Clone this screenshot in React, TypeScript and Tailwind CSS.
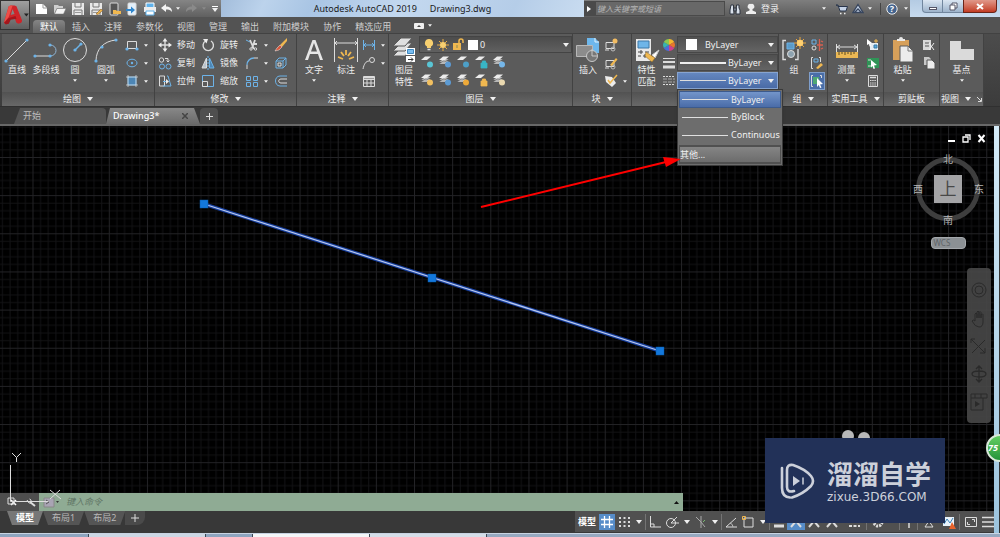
import { FC, ReactNode } from 'react';
import clsx from 'clsx';

interface IconProps {
  w?: number;
  h?: number;
  children: ReactNode;
}

const Icon: FC<IconProps> = ({ w = 14, h = 14, children }) => (
  <svg width={w} height={h} viewBox={`0 0 ${w} ${h}`} fill="none" stroke="#dcdcdc" className="shrink-0" aria-hidden="true">
    {children}
  </svg>
);

const Caret: FC<{ small?: boolean; dim?: boolean }> = ({ small, dim }) => (
  <svg width={small ? 4 : 6} height={small ? 3 : 4} viewBox="0 0 6 4" className="shrink-0" aria-hidden="true">
    <path d="M0 0h6L3 4z" fill={dim ? '#8a8a8a' : '#f0f0f0'} />
  </svg>
);

const BLUE = '#6db3e8';
const GOLD = '#f0b850';

/* ---------- title bar ---------- */

const NewFile = () => (
  <Icon>
    <path d="M1 2h7l4 4v6H1z" fill="#fff" stroke="none" />
    <path d="M8 2v4h4" stroke="#999" />
  </Icon>
);

const OpenFile = () => (
  <Icon>
    <path d="M1 12V3h4l1 1h4v2H4z" fill="#cfcfcf" stroke="none" />
    <path d="M4 6.500h9L10.500 12H1.500z" fill="#f4f4f4" stroke="#777" strokeWidth=".5" />
  </Icon>
);

const Save: FC<{ pen?: boolean }> = ({ pen }) => (
  <Icon>
    <path d="M1 1h12v12H1z" fill="#e8e8e8" stroke="none" />
    <path d="M4 1v4h6V1M3 13V8h8v5" stroke="#777" />
    <path d="M4 10.500h6" stroke="#999" />
    {pen && <path d="M7 12l5-5 1.500 1.500-4.500 4z" fill={GOLD} stroke="#8a5a20" strokeWidth=".6" />}
  </Icon>
);

const Device: FC<{ upload?: boolean }> = ({ upload }) => (
  <Icon>
    <rect x="3" y="1" width="8" height="12" rx="1" fill={upload ? '#e4f0fa' : '#555'} stroke="#ddd" />
    {upload ? (
      <path d="M1 7h5V4.500L10 8l-4 3.500V9H1z" fill="#2f86cc" stroke="none" />
    ) : (
      <path d="M6 12V8h3l1 1h4v3z" fill={GOLD} stroke="none" />
    )}
  </Icon>
);

const Printer = () => (
  <Icon>
    <path d="M3 1h8v5H3z" fill="#5fb1ea" stroke="#fff" />
    <path d="M1 5h12v5H1z" fill="#ececec" stroke="none" />
    <path d="M3 9h8v4H3z" fill="#fff" stroke="#5fb1ea" />
  </Icon>
);

const Undo: FC<{ flip?: boolean }> = ({ flip }) => (
  <Icon w={13} h={12}>
    {flip ? (
      <path d="M12 5L7 1v2.500C3.500 3.500 1 5 1 9c1.500-2 3-2.500 6-2.500V9z" fill="#8a8a8a" stroke="none" />
    ) : (
      <path d="M1 5l5-4v2.500C9.500 3.500 12 5 12 9c-1.500-2-3-2.500-6-2.500V9z" fill="#f4f4f4" stroke="none" />
    )}
  </Icon>
);

const quickAccess = [
  { label: '新建', icon: <NewFile /> },
  { label: '打开', icon: <OpenFile /> },
  { label: '保存', icon: <Save /> },
  { label: '另存为', icon: <Save pen /> },
  { label: '从移动设备打开', icon: <Device /> },
  { label: '保存到移动设备', icon: <Device upload /> },
  { label: '打印', icon: <Printer /> }
];

const TitleBar: FC = () => (
  <div className="flex h-[17px] bg-gradient-to-b from-[#b4cbe3] to-[#c8dbee]">
    <div className="flex items-center bg-gradient-to-b from-[#858585] to-[#606060] pl-[33px]">
      {quickAccess.map(item => (
        <button key={item.label} aria-label={item.label} className="flex w-[18px] justify-center">
          {item.icon}
        </button>
      ))}
      <button aria-label="放弃" className="flex w-[14px] justify-center"><Undo /></button>
      <button aria-label="放弃列表" className="flex w-[10px] justify-center"><Caret small /></button>
      <button aria-label="重做" className="flex w-4 justify-center"><Undo flip /></button>
      <button aria-label="重做列表" className="flex w-[10px] justify-center"><Caret small dim /></button>
      <button aria-label="自定义快速访问工具栏" className="flex w-3 flex-col items-center gap-px">
        <span className="h-px w-[6px] bg-white" />
        <Caret />
      </button>
    </div>
    <h1 className="flex flex-1 items-center justify-center gap-[13px] bg-[linear-gradient(115deg,#a3bddb_0%,#bcd3ec_12%,#a9c5e4_25%,#c3d8ef_50%,#b5cde8_80%,#c9dcf0_100%)] text-[9px] whitespace-nowrap text-[#1a1a1a]">
      <span>Autodesk AutoCAD 2019</span>
      <span>Drawing3.dwg</span>
    </h1>
    <div className="flex items-center bg-gradient-to-b from-[#7e7e7e] to-[#5c5c5c]">
      <button aria-label="展开搜索" className="flex h-[15px] w-[11px] items-center justify-center bg-[#4a4a4a]">
        <Icon w={4} h={6}><path d="M0 0l4 3-4 3z" fill="#fff" stroke="none" /></Icon>
      </button>
      <input
        aria-label="搜索"
        placeholder="键入关键字或短语"
        className="h-[15px] w-[130px] border border-[#4a4a4a] bg-[#686868] px-px text-[8px] italic outline-none placeholder:text-[#b5b5b5]"
      />
      <button aria-label="查找" className="flex w-5 justify-center">
        <Icon w={12} h={12}>
          <path d="M2 2h2.500v3L5 11H1V7zM7.500 2H10v3l1 2v4H7zM5 5h2v3H5z" fill="#d8e0ea" stroke="#2f3540" />
        </Icon>
      </button>
      <button className="flex items-center gap-1 text-[9px] text-[#eee]">
        <Icon w={12} h={12}>
          <path d="M6 1a2.500 2.500 0 0 1 1.500 5v1.500L11 9v2H1V9l3.500-1.500V6A2.500 2.500 0 0 1 6 1z" fill="#eee" stroke="none" />
        </Icon>
        登录
      </button>
      <button aria-label="登录菜单" className="mr-1 ml-[41px] flex w-2 justify-center"><Caret small /></button>
      <button aria-label="应用商店" className="flex w-[18px] justify-center">
        <Icon w={13} h={12}>
          <path d="M1 2h2l2 6h6l1.500-4.500H4z" fill="#c4d2e6" stroke="#28344a" />
          <path d="M5 10.500h1.500M9 10.500h1.500" stroke="#eee" strokeWidth="1.500" />
        </Icon>
      </button>
      <button aria-label="保持连接" className="flex w-4 justify-center">
        <Icon w={12} h={12}><path d="M6 1.500L11 9.500H1zM3 9l3-3 3 3" fill="#c4d2e6" stroke="#38465e" strokeWidth="1.300" /></Icon>
      </button>
      <button aria-label="连接菜单" className="mr-[6px] flex w-2 justify-center"><Caret small /></button>
      <button aria-label="帮助" className="flex w-[22px] justify-center border-l border-[#444]">
        <Icon w={12} h={12}>
          <circle cx="6" cy="6" r="5.200" fill="#44648e" stroke="#eee" />
          <text x="6" y="9" textAnchor="middle" fontSize="9" fontWeight="700" fill="#fff" stroke="none">?</text>
        </Icon>
      </button>
      <button aria-label="帮助菜单" className="flex w-2 justify-center"><Caret small /></button>
    </div>
    <div className="flex items-start pr-[3px] pl-3">
      <button aria-label="最小化" className="flex h-[13px] w-[21px] items-center justify-center rounded-bl border border-t-0 border-[#71869e] bg-gradient-to-b from-[#dbe6f2] to-[#9db3cb]">
        <span className="mt-1 h-[3px] w-2 border border-[#556] bg-white" />
      </button>
      <button aria-label="还原" className="flex h-[13px] w-5 items-center justify-center border-b border-[#71869e] bg-gradient-to-b from-[#dbe6f2] to-[#9db3cb]">
        <Icon w={9} h={9}>
          <path d="M3 1h5v5H3z" fill="#fff" stroke="#556" />
          <path d="M1 3h5v5H1z" fill="#fff" stroke="#556" />
        </Icon>
      </button>
      <button aria-label="关闭" className="flex h-[13px] w-[34px] items-center justify-center rounded-br border border-t-0 border-[#6b2418] bg-gradient-to-b from-[#e0988a] to-[#c23a22]">
        <Icon w={8} h={7}><path d="M1 1l6 5M7 1L1 6" stroke="#fff" strokeWidth="2" /></Icon>
      </button>
    </div>
  </div>
);

const ribbonTabs = ['默认', '插入', '注释', '参数化', '视图', '管理', '输出', '附加模块', '协作', '精选应用'];

const RibbonTabs: FC = () => (
  <nav className="flex h-4 items-stretch bg-[#535353] pl-[33px] text-[9px] text-[#cfcfcf]">
    {ribbonTabs.map((tab, i) => (
      <button
        key={tab}
        className={clsx('mt-[3px] px-[7px] leading-[13px]', i === 0 && 'rounded-t-sm bg-gradient-to-b from-[#858585] to-[#636363] text-white')}
      >
        {tab}
      </button>
    ))}
    <button aria-label="最小化功能区" className="ml-4 flex items-center gap-1 pt-px">
      <Icon w={10} h={6}>
        <rect width="10" height="6" rx="1" fill="#f0f0f0" stroke="none" />
        <path d="M3 4l2-2 2 2z" fill="#444" stroke="none" />
      </Icon>
      <Caret small />
    </button>
  </nav>
);

/* ---------- ribbon building blocks ---------- */

interface PanelProps {
  title?: string;
  width: string;
  arrow?: boolean;
  extra?: ReactNode;
  children: ReactNode;
}

const Panel: FC<PanelProps> = ({ title, width, arrow = true, extra, children }) => (
  <section className={clsx('flex shrink-0 flex-col border-r border-[#424242] bg-[#5b5b5b]', width)}>
    <div className="flex flex-1 pt-[2px]">{children}</div>
    <button
      aria-label={title ?? '特性'}
      className="flex h-[14px] items-center justify-center gap-[6px] bg-gradient-to-b from-[#525252] to-[#686868] text-[9px] leading-[14px] text-[#f0f0f0]"
    >
      {title}
      {title && arrow && <Caret />}
      {extra}
    </button>
  </section>
);

interface ToolProps {
  label: string;
  icon: ReactNode;
  width: string;
  arrow?: boolean;
}

const Tool: FC<ToolProps> = ({ label, icon, width, arrow }) => (
  <button className={clsx('flex shrink-0 flex-col items-center text-[9px] leading-3 text-[#ececec]', width)}>
    <span className="flex h-7 items-center">{icon}</span>
    <span className="whitespace-pre-line">{label}</span>
    {arrow && <span className="flex h-2 items-center"><Caret small /></span>}
  </button>
);

interface SmallToolProps {
  name: string;
  icon: ReactNode;
  text?: boolean;
  arrow?: boolean;
  active?: boolean;
}

const SmallTool: FC<SmallToolProps> = ({ name, icon, text, arrow, active }) => (
  <button
    aria-label={name}
    className={clsx('flex h-[18px] items-center gap-[5px] px-px text-[9px] text-[#ececec]', active && 'bg-[#4a6ea8] outline outline-[#7f9ecb] -outline-offset-1')}
  >
    {icon}
    {text && name}
    {arrow && <Caret small />}
  </button>
);

/* ---------- ribbon icons ---------- */

const Dot: FC<{ x: number; y: number }> = ({ x, y }) => <circle cx={x} cy={y} r="1.600" fill={BLUE} stroke="none" />;

const LineIcon = () => (
  <Icon w={26} h={26}><path d="M2 24L23 3" /><Dot x={2} y={24} /><Dot x={23} y={3} /></Icon>
);
const PolylineIcon = () => (
  <Icon w={26} h={26}>
    <path d="M2 19h15" /><path d="M17 19c8 0 8-11 0-11" stroke="#8fb4d4" />
    <Dot x={2} y={19} /><Dot x={17} y={19} /><Dot x={17} y={8} />
  </Icon>
);
const CircleIcon = () => (
  <Icon w={26} h={26}><circle cx="13" cy="13" r="11.500" /><path d="M13 13l6-6" stroke={BLUE} strokeWidth="1.500" /><Dot x={13} y={13} /><Dot x={19} y={7} /></Icon>
);
const ArcIcon = () => (
  <Icon w={26} h={26}><path d="M3 24C3 12 11 4 23 3" /><Dot x={3} y={24} /><Dot x={9} y={10} /><Dot x={23} y={3} /></Icon>
);
const RectIcon = () => (
  <Icon><path d="M2.500 3.500h9v7h-9z" /><Dot x={2} y={11} /><Dot x={12} y={11} /></Icon>
);
const EllipseIcon = () => (
  <Icon><ellipse cx="7" cy="7" rx="5" ry="3.800" stroke={BLUE} /><circle cx="7" cy="7" r="1.200" fill={BLUE} stroke="none" /></Icon>
);
const HatchIcon = () => (
  <Icon><path d="M3 3h8v8H3z" fill="#4d86b5" stroke={BLUE} /><path d="M1 3h12M1 11h12M3 1v12M11 1v12" strokeWidth=".7" /></Icon>
);
const MoveIcon = () => (
  <Icon>
    <path d="M7 2v10M2 7h10" strokeWidth="1.400" />
    <path d="M7 0L4.500 3.500h5zM7 14l-2.500-3.500h5zM0 7l3.500-2.500v5zM14 7l-3.500-2.500v5z" fill="#eee" stroke="none" />
  </Icon>
);
const RotateIcon = () => (
  <Icon><path d="M4.500 3A5.200 5.200 0 1 0 10 3" strokeWidth="1.400" /><path d="M2 1l5 0-1.500 4.500z" fill="#eee" stroke="none" /></Icon>
);
const CopyIcon = () => (
  <Icon>
    <circle cx="3.500" cy="4" r="2.200" /><circle cx="4" cy="10.500" r="2.500" stroke={BLUE} /><circle cx="10.500" cy="10.500" r="2.500" stroke={BLUE} />
    <path d="M7 2.500h3v3M8.500 4.500L10 6l1.500-1.500" />
  </Icon>
);
const MirrorIcon = () => (
  <Icon><path d="M5.500 2v10H1z" fill="#b8c4cf" /><path d="M8.500 2v10H13z" stroke={BLUE} fill="#4d86b5" /><path d="M7 0v14" strokeDasharray="2 1" stroke={BLUE} /></Icon>
);
const StretchIcon = () => (
  <Icon><path d="M1.500 2v10h5V2z" /><path d="M5 7.500h4M9 2h1l3 10H5" stroke={BLUE} /><path d="M8 5l3 2.500L8 10z" fill="#eee" stroke="none" /></Icon>
);
const ScaleIcon = () => (
  <Icon><path d="M1.500 1.500h11v11h-11z" stroke={BLUE} /><path d="M1.500 7.500h5v5h-5z" /></Icon>
);
const TrimIcon = () => (
  <Icon><path d="M1 2l4 2" stroke={BLUE} /><path d="M5 2l4 9M10 2L7 10M8 6h4" strokeWidth="1.800" /><circle cx="6" cy="11" r="1.200" /><circle cx="10.500" cy="11" r="1.200" /></Icon>
);
const FilletIcon = () => (
  <Icon><path d="M2 13V9" /><path d="M2 9c0-4 3-7 7-7" stroke={BLUE} strokeWidth="1.300" /><path d="M9 2h4" /></Icon>
);
const ArrayIcon = () => (
  <Icon><path d="M1.500 2.500h4v4h-4zM8.500 2.500h4v4h-4zM1.500 8.500h4v4h-4zM8.500 8.500h4v4h-4z" stroke={BLUE} /></Icon>
);
const EraseIcon = () => (
  <Icon><path d="M13 0L6 7l2 2 5-6z" fill={GOLD} stroke="none" /><path d="M6 7l2 2-3 3-4 1 2-3z" fill="#d8583c" stroke="#eee" strokeWidth=".5" /></Icon>
);
const ExplodeIcon = () => (
  <Icon><path d="M2 5h7v7H2zM2 5l3-3h7l-3 3M12 2v7l-3 3" stroke={BLUE} /><path d="M4 7h3v3H4z" /></Icon>
);
const OffsetIcon = () => (
  <Icon><path d="M13 2H6c-6 0-6 10 0 10h7" stroke={BLUE} /><path d="M13 5H7c-3 0-3 4 0 4h6" /></Icon>
);
const TextIcon = () => (
  <Icon w={22} h={26}><path d="M2 23L9.500 3h3L20 23h-3l-2-6H7l-2 6zM8 14.500h6L11 6z" fill="#e6e6e6" fillRule="evenodd" stroke="none" /></Icon>
);
const DimensionIcon = () => (
  <Icon w={26} h={26}>
    <path d="M1.500 1v24M24.500 1v24M2 6h22M4 4L2 6l2 2M22 4l2 2-2 2" />
    <path d="M13 13v5M8 15l3 4M18 15l-3 4M5 20l5 2M21 20l-5 2" stroke={GOLD} strokeWidth="1.800" />
  </Icon>
);
const LinearDimIcon = () => (
  <Icon><path d="M1.500 2v10M12.500 2v10" stroke={BLUE} /><path d="M2 7h10M4 5L2 7l2 2M10 5l2 2-2 2" stroke={BLUE} /></Icon>
);
const LeaderIcon = () => (
  <Icon><path d="M1 13c1-5 3-8 6-8" /><circle cx="10" cy="4" r="2.500" /></Icon>
);
const TableIcon = () => (
  <Icon><path d="M1.500 2.500h11v10h-11zM1.500 5.500h11M1.500 9h11M5 5v7M9 5v7" /><path d="M2 3.500h10" strokeWidth="2" /></Icon>
);
const LayersIcon = () => (
  <Icon w={26} h={28}>
    {[17, 12, 7].map(y => (
      <path key={y} d={`M2 ${y + 3}L10 ${y - 5}h11l-7 8z`} fill="#e0e0e0" stroke="#5b5b5b" />
    ))}
    <path d="M15 12h9v7h-9zM15 20h9v6h-9z" fill="#fff" stroke="none" />
    <path d="M16.500 13.500h6v4h-6z" fill="#78bdf0" stroke="#3f88c0" />
    <path d="M17 23.500h5M20 21.500l2 2-2 2" stroke="#333" />
  </Icon>
);
const MiniLayer: FC<{ color: string; stack?: boolean; square?: boolean }> = ({ color, stack, square }) => (
  <Icon>
    {stack && <path d="M1 9l4-3h6l-4 3zM1 7l4-3h6L7 7z" fill="#d8d8d8" stroke="#555" strokeWidth=".5" />}
    <path d="M1 5l4-3.500h6L7 5z" fill="#ececec" stroke="none" />
    {square ? (
      <path d="M7 8h6v5H7zM8.500 8V6h3v2" fill={color} stroke={color} strokeWidth=".8" />
    ) : (
      <circle cx="10" cy="9.500" r="3" fill={color} stroke="none" />
    )}
  </Icon>
);
const BulbIcon = () => (
  <Icon w={10} h={13}><path d="M5 1a4 4 0 0 1 2 7.500V10H3V8.500A4 4 0 0 1 5 1z" fill="#f8d070" stroke="none" /><path d="M3.500 11.500h3" strokeWidth="1.500" /></Icon>
);
const SunIcon = () => (
  <Icon w={12} h={12}><path d="M6 0v12M0 6h12M2 2l8 8M10 2l-8 8" stroke="#e8ac45" /><circle cx="6" cy="6" r="3" fill="#f8cf70" stroke="none" /></Icon>
);
const UnlockIcon = () => (
  <Icon w={12} h={13}><path d="M7 6V3a2 2 0 0 1 4 0v2" stroke={GOLD} strokeWidth="1.500" /><path d="M1 5h8v7H1z" fill={GOLD} stroke="none" /><path d="M5 7v3" stroke="#885" /></Icon>
);
const InsertIcon = () => (
  <Icon w={26} h={26}>
    <path d="M12 1h8l4 4v11H12z" fill="#6db7ec" stroke="none" /><path d="M20 1v4h4" stroke="#e4f2fc" />
    <path d="M1.500 8.500h16v11h-16z" fill="#8c8c8c" stroke="#b8b8b8" />
    <circle cx="17" cy="19" r="5.500" fill="#777" stroke="#c8c8c8" /><path d="M17 12v7h5" stroke="#c8c8c8" />
  </Icon>
);
const BlockIcon: FC<{ edit?: boolean }> = ({ edit }) => (
  <Icon>
    <path d="M2 4.500h8v6H2zM1 12h4" /><circle cx="9" cy="11" r="2" stroke="#bbb" />
    {edit ? <path d="M6 9l6-7 1.500 1.500L8 10z" fill={GOLD} stroke="none" /> : <circle cx="11" cy="3" r="2.500" fill="#f2bc62" stroke="none" />}
  </Icon>
);
const TagIcon = () => (
  <Icon><path d="M1 2l7 1 4 6-4 4-6-5z" fill="#ececec" stroke="none" /><path d="M4 6l2 3 7-8" stroke={GOLD} strokeWidth="1.500" /></Icon>
);
const MatchIcon = () => (
  <Icon w={26} h={26}>
    <path d="M2 2h15v22H2z" fill="#e8e8e8" stroke="none" /><path d="M4 4h11v7H4z" fill="#6eb5e8" stroke="#3c78a8" />
    <path d="M4 15h5M11 15h4M4 19h3M9 19h5M7 13v4M11 17v4" stroke="#444" />
    <path d="M25 13l-7 5 3 3z" fill="#fff" stroke="#ccc" /><path d="M12 15l9 6-3 4-7-6z" fill={GOLD} stroke="#8a6520" strokeWidth=".5" />
  </Icon>
);
const ColorWheel = () => (
  <Icon>
    <g stroke="none">
      <path d="M7 7V1a6 6 0 0 1 5.200 3z" fill="#f6b62d" /><path d="M7 7l5.200-3a6 6 0 0 1 0 6z" fill="#e8762c" />
      <path d="M7 7l5.200 3A6 6 0 0 1 7 13z" fill="#d0408c" /><path d="M7 7v6a6 6 0 0 1-5.200-3z" fill="#4b6fd8" />
      <path d="M7 7l-5.200 3a6 6 0 0 1 0-6z" fill="#37b4b0" /><path d="M7 7L1.800 4A6 6 0 0 1 7 1z" fill="#8cc850" />
    </g>
  </Icon>
);
const WeightIcon = () => (
  <Icon><path d="M1 2.500h12" /><path d="M1 6h12" strokeWidth="2" /><path d="M1 11h12" strokeWidth="3" /></Icon>
);
const LinetypeIcon = () => (
  <Icon><path d="M1 2.500h12M1 10.500h12" strokeDasharray="2 1" /><path d="M1 5h12M1 8h12" strokeDasharray="4 1" stroke="#aaa" /></Icon>
);
const Star: FC = () => (
  <g><path d="M19 0v12M13 6h12M15 2l8 8M23 2l-8 8" stroke="#e8a53c" /><circle cx="19" cy="6" r="3.200" fill="#ffd070" stroke="none" /></g>
);
const GroupIcon = () => (
  <Icon w={26} h={26}>
    <path d="M5 3.500H2v19h3M14 22.500h3V12" strokeWidth="1.400" />
    <path d="M6 6h7v6H6z" fill="#5b9bc8" stroke={BLUE} /><circle cx="10" cy="17" r="3.500" fill="#8ea3b0" />
    <Star />
  </Icon>
);
const UngroupIcon = () => (
  <Icon><path d="M2 2h4v4H2z" stroke={BLUE} /><circle cx="4" cy="10" r="2" /><path d="M9.500 1v12M7 7h6M11 3l2 1M11 11l2-1" stroke="#d86050" strokeWidth="1.300" /></Icon>
);
const GroupEditIcon = () => (
  <Icon><path d="M3 1.500H1.500v11H3M9 1.500h1.500V6" /><path d="M4 3h4v3H4z" stroke={BLUE} /><path d="M6 12l5-5 2 2-5 4z" fill={GOLD} stroke="none" /></Icon>
);
const GroupPickIcon = () => (
  <Icon><path d="M3 1.500H1.500v11H3M10 1.500h1.500V4" /><path d="M3 3h6v7H3z" fill="#4fa873" stroke="none" /><path d="M7 4l6 6-3 .500 1.500 3-1.500.5-1.200-3L7 13z" fill="#fff" stroke="none" /></Icon>
);
const MeasureIcon = () => (
  <Icon w={24} h={26}>
    <path d="M1.500 7v8M22.500 7v8M2 10h20M5 8l-3 2 3 2M19 8l3 2-3 2" />
    <path d="M1 15h22v6H1z" fill="#eab754" stroke="none" /><path d="M4 15v3M7 15v2M10 15v3M13 15v2M16 15v3M19 15v2" stroke="#5b4a20" />
  </Icon>
);
const SelectIcon = () => (
  <Icon><path d="M4 5h8v7H4z" fill="#e6eef4" stroke="none" /><path d="M8 7h3v3H8z" fill="#5cabe0" stroke="#377ba8" /><path d="M1 1l5 4-2 .5L5 8 3.500 8.500 3 6 1 7z" fill="#fff" stroke="none" /><path d="M10 1v4M8 3h4" stroke={GOLD} /></Icon>
);
const QuickSelectIcon = () => (
  <Icon><path d="M1 2h12v10H1z" fill="#2f9456" stroke="none" /><path d="M2 4h3M2 10h3" /><path d="M5 4l6 5-3 .5 1 3L7.500 13 6.500 10 5 11.500z" fill="#fff" stroke="none" /></Icon>
);
const CalcIcon = () => (
  <Icon><path d="M2.500 1.500h9v11h-9z" /><path d="M4 3.500h6" strokeWidth="1.500" /><path d="M4 6.500h6M4 9h6M4 11h6" strokeDasharray="1.500 .7" /></Icon>
);
const PasteIcon = () => (
  <Icon w={24} h={26}>
    <path d="M2 3h16v20H2z" fill="#d7a05a" stroke="none" /><path d="M6 4V2h2a2 2 0 0 1 4 0h2v2z" fill="#e8e8e8" stroke="none" />
    <path d="M9 9h8l5 5v11H9z" fill="#ececec" stroke="#5b5b5b" /><path d="M17 9v5h5" stroke="#777" />
  </Icon>
);
const CutIcon = () => (
  <Icon><path d="M1 2h8v10H1z" fill="#d8d8d8" stroke="none" /><path d="M3 5h4M3 8h4" stroke="#555" /><path d="M7 5l5 7M12 5l-5 7" stroke="#f0f0f0" /></Icon>
);
const CopyClipIcon = () => (
  <Icon><path d="M2 1h5l2 2v6H2z" fill="#c8c8c8" stroke="none" /><path d="M5 4h5l3 3v6H5z" fill="#ececec" stroke="#555" /></Icon>
);
const BaseIcon = () => (
  <Icon w={26} h={26}><path d="M1 4h11v8h13v11H1z" fill="#dadada" stroke="none" /></Icon>
);

/* ---------- properties ---------- */

const comboText = 'absolute inset-0 h-full w-full appearance-none bg-transparent text-[9px] text-[#f0f0f0] outline-none';

interface ComboProps {
  label: string;
  kind: 'color' | 'weight' | 'type';
}

const Combo: FC<ComboProps> = ({ label, kind }) => (
  <div
    className={clsx(
      'relative flex h-[17px] items-center border px-[2px]',
      kind === 'type' ? 'border-[#87a4d0] bg-gradient-to-b from-[#6487bf] to-[#4a6ba6]' : 'border-[#474747] bg-gradient-to-b from-[#505050] to-[#646464]'
    )}
  >
    {kind === 'color' && <span className="ml-[6px] size-[11px] bg-white" />}
    {kind === 'weight' && <span className="h-[2px] w-[46px] bg-[#eee]" />}
    {kind === 'type' && <span className="h-px w-[46px] bg-[#ddd]" />}
    <select aria-label={label} className={clsx(comboText, kind === 'color' ? 'pl-[27px]' : 'pl-[50px]')}>
      <option>ByLayer</option>
    </select>
    <span className="pointer-events-none absolute right-[3px]"><Caret /></span>
  </div>
);

const LinetypeMenu: FC = () => (
  <div role="listbox" aria-label="线型" className="absolute top-full left-0 z-10 w-[106px] border border-[#3a3a3a] bg-[#6d6d6d] p-px text-[9px] text-[#f0f0f0] shadow">
    {['ByLayer', 'ByBlock', 'Continuous'].map((type, i) => (
      <div
        key={type}
        role="option"
        aria-selected={i === 0}
        className={clsx('flex items-center gap-[3px] border px-[2px]', i === 0 ? 'h-[17px] border-[#3c5a8c] bg-gradient-to-b from-[#7395ca] to-[#4a6ca8]' : 'h-[18px] border-transparent')}
      >
        <span className="h-px w-[46px] shrink-0 bg-[#e0e0e0]" />
        {type}
      </div>
    ))}
    <button className="mt-px flex h-[19px] w-full items-center border-2 border-x border-[#505050] bg-gradient-to-b from-[#858585] to-[#6c6c6c]">其他...</button>
  </div>
);

const Column: FC<{ className?: string; children: ReactNode }> = ({ className, children }) => (
  <div className={clsx('flex shrink-0 flex-col items-start', className)}>{children}</div>
);

const Ribbon: FC = () => (
  <div className="flex h-[73px] border-t border-[#424242] bg-gradient-to-b from-[#4c4c4c] to-[#3c3c3c] pl-[2px]">
    <Panel title="绘图" width="w-[153px]">
      <Tool label="直线" width="w-[30px]" icon={<LineIcon />} />
      <Tool label="多段线" width="w-[28px]" icon={<PolylineIcon />} />
      <Tool label="圆" width="w-[30px]" icon={<CircleIcon />} arrow />
      <Tool label="圆弧" width="w-[32px]" icon={<ArcIcon />} arrow />
      <Column className="ml-[2px]">
        <SmallTool name="矩形" icon={<RectIcon />} arrow />
        <SmallTool name="椭圆" icon={<EllipseIcon />} arrow />
        <SmallTool name="图案填充" icon={<HatchIcon />} arrow />
      </Column>
    </Panel>
    <Panel title="修改" width="w-[142px]">
      <Column className="ml-[2px] w-[43px]">
        <SmallTool name="移动" text icon={<MoveIcon />} />
        <SmallTool name="复制" text icon={<CopyIcon />} />
        <SmallTool name="拉伸" text icon={<StretchIcon />} />
      </Column>
      <Column className="w-[44px]">
        <SmallTool name="旋转" text icon={<RotateIcon />} />
        <SmallTool name="镜像" text icon={<MirrorIcon />} />
        <SmallTool name="缩放" text icon={<ScaleIcon />} />
      </Column>
      <Column className="w-[29px]">
        <SmallTool name="修剪" icon={<TrimIcon />} arrow />
        <SmallTool name="圆角" icon={<FilletIcon />} arrow />
        <SmallTool name="阵列" icon={<ArrayIcon />} arrow />
      </Column>
      <Column>
        <SmallTool name="删除" icon={<EraseIcon />} />
        <SmallTool name="分解" icon={<ExplodeIcon />} />
        <SmallTool name="偏移" icon={<OffsetIcon />} />
      </Column>
    </Panel>
    <Panel title="注释" width="w-[92px]">
      <Tool label="文字" width="w-[34px]" icon={<TextIcon />} arrow />
      <Tool label="标注" width="w-[30px]" icon={<DimensionIcon />} />
      <Column>
        <SmallTool name="线性" icon={<LinearDimIcon />} arrow />
        <SmallTool name="引线" icon={<LeaderIcon />} arrow />
        <SmallTool name="表格" icon={<TableIcon />} />
      </Column>
    </Panel>
    <Panel title="图层" width="w-[184px]">
      <Tool label={'图层\n特性'} width="w-[30px]" icon={<LayersIcon />} />
      <div className="flex flex-1 flex-col">
        <div className="relative flex h-[17px] items-center gap-[3px] border border-[#444] bg-gradient-to-b from-[#4c4c4c] to-[#606060] px-1">
          <BulbIcon />
          <SunIcon />
          <UnlockIcon />
          <span className="ml-px size-[10px] bg-white" />
          <select aria-label="图层" className={clsx(comboText, 'pl-[60px]')}>
            <option>0</option>
          </select>
          <span className="pointer-events-none absolute right-[2px]"><Caret /></span>
        </div>
        <div className="flex gap-[2px]">
          <SmallTool name="关" icon={<MiniLayer color="#59c5d5" />} />
          <SmallTool name="隔离" icon={<MiniLayer color="#5d9bd3" stack />} />
          <SmallTool name="冻结" icon={<MiniLayer color="#4d9fc7" />} />
          <SmallTool name="锁定" icon={<MiniLayer color="#39b5c5" square />} />
          <SmallTool name="置为当前" icon={<MiniLayer color="#75b6e8" stack />} />
        </div>
        <div className="flex gap-[2px]">
          <SmallTool name="打开所有图层" icon={<MiniLayer color="#f2c060" stack />} />
          <SmallTool name="取消隔离" icon={<MiniLayer color="#5d9bd3" stack />} />
          <SmallTool name="解冻" icon={<MiniLayer color="#eda939" stack />} />
          <SmallTool name="解锁" icon={<MiniLayer color="#f0b850" square />} />
          <SmallTool name="匹配图层" icon={<MiniLayer color="#ead9b0" stack />} />
        </div>
      </div>
    </Panel>
    <Panel title="块" width="w-[59px]">
      <Tool label="插入" width="w-[30px]" icon={<InsertIcon />} />
      <Column>
        <SmallTool name="创建" icon={<BlockIcon />} />
        <SmallTool name="编辑" icon={<BlockIcon edit />} />
        <SmallTool name="编辑属性" icon={<TagIcon />} arrow />
      </Column>
    </Panel>
    <Panel width="w-[147px]">
      <Tool label={'特性\n匹配'} width="w-[29px]" icon={<MatchIcon />} />
      <Column>
        <SmallTool name="对象颜色" icon={<ColorWheel />} />
        <SmallTool name="线宽" icon={<WeightIcon />} />
        <SmallTool name="线型" icon={<LinetypeIcon />} />
      </Column>
      <div className="relative flex flex-1 flex-col gap-px self-start">
        <Combo label="对象颜色" kind="color" />
        <Combo label="线宽" kind="weight" />
        <Combo label="线型" kind="type" />
        <LinetypeMenu />
      </div>
    </Panel>
    <Panel title="组" width="w-[49px]">
      <Tool label="组" width="w-[30px]" icon={<GroupIcon />} />
      <Column>
        <SmallTool name="解除编组" icon={<UngroupIcon />} />
        <SmallTool name="组编辑" icon={<GroupEditIcon />} />
        <SmallTool name="启用组选择" icon={<GroupPickIcon />} active />
      </Column>
    </Panel>
    <Panel title="实用工具" width="w-[56px]">
      <Tool label="测量" width="w-[37px]" icon={<MeasureIcon />} arrow />
      <Column>
        <SmallTool name="选择" icon={<SelectIcon />} />
        <SmallTool name="快速选择" icon={<QuickSelectIcon />} />
        <SmallTool name="快速计算器" icon={<CalcIcon />} />
      </Column>
    </Panel>
    <Panel title="剪贴板" width="w-[56px]" arrow={false}>
      <Tool label="粘贴" width="w-[37px]" icon={<PasteIcon />} arrow />
      <Column>
        <SmallTool name="剪切" icon={<CutIcon />} />
        <SmallTool name="复制裁剪" icon={<CopyClipIcon />} />
      </Column>
    </Panel>
    <Panel title="视图" width="w-[44px]" extra={<Icon w={5} h={5}><path d="M0 0l4 4M4.500 1v3.500H1" /></Icon>}>
      <Tool label="基点" width="w-[43px]" icon={<BaseIcon />} arrow />
    </Panel>
  </div>
);

const FileTabs: FC = () => (
  <div className="flex h-5 items-end border-t border-b-2 border-[#303030] border-b-[#686868] bg-[#393939] pl-[14px] text-[9px]">
    <button className="h-4 w-[92px] rounded-t bg-[#565656] pl-[9px] text-left text-[#bdbdbd] [clip-path:polygon(6px_0,100%_0,100%_100%,0_100%)]">开始</button>
    <div className="flex h-4 w-[94px] items-center justify-between rounded-t bg-gradient-to-b from-[#888] to-[#6a6a6a] pr-3 pl-[7px] font-medium text-white [clip-path:polygon(4px_0,88px_0,100%_100%,0_100%)]">
      <a href="#drawing">Drawing3*</a>
      <button aria-label="关闭图形" className="flex"><Icon w={6} h={6}><path d="M0 0l6 6M6 0L0 6" stroke="#444" strokeWidth="1.500" /></Icon></button>
    </div>
    <button aria-label="新图形" className="flex h-4 w-[18px] items-center justify-center rounded-t bg-[#4f4f4f]">
      <Icon w={7} h={7}><path d="M3.500 0v7M0 3.500h7" /></Icon>
    </button>
  </div>
);

/* ---------- drawing area ---------- */

const Grid: FC = () => (
  <svg className="absolute inset-0 h-full w-full" aria-hidden="true">
    <defs>
      <pattern id="grid" width="38.150" height="38.150" x="32.500" y="31" patternUnits="userSpaceOnUse">
        <path d="M8.130 0v38.150M15.760 0v38.150M23.390 0v38.150M31.020 0v38.150M0 8.130h38.150M0 15.760h38.150M0 23.390h38.150M0 31.020h38.150" stroke="#121214" />
        <path d="M.5 0v38.150M0 .5h38.150" stroke="#232326" />
      </pattern>
    </defs>
    <rect width="100%" height="100%" fill="url(#grid)" />
    <path d="M204 78L660 225" stroke="#173f9e" strokeWidth="3.500" />
    <path d="M204 78L660 225" stroke="#b9c9ee" strokeWidth="1.200" />
    {[[204, 78], [432, 152], [660, 225]].map(([x, y]) => (
      <rect key={x} x={x - 4} y={y - 4} width="8" height="8" fill="#1378dc" stroke="#0a58a8" strokeWidth=".5" />
    ))}
  </svg>
);

const Pointer: FC = () => (
  <svg width="204" height="56" viewBox="0 0 204 56" className="absolute top-[28px] left-[480px] z-20" aria-hidden="true">
    <path d="M1 53L186 8" stroke="#f00" strokeWidth="2" />
    <path d="M201 5L183 3l3 10z" fill="#f00" />
  </svg>
);

const ViewCube: FC = () => (
  <div className="absolute top-[24px] right-[8px] flex flex-col items-center gap-[7px]">
    <svg width="76" height="80" viewBox="0 0 76 80" fontSize="10" fill="#b4b4b4" textAnchor="middle">
      <circle cx="38" cy="39" r="29.500" fill="none" stroke="#3e3e3e" strokeWidth="5" />
      <path d="M24 25h28v28H24z" fill="#a4a4a6" />
      <text x="38" y="45" fontSize="17" fill="#484848">上</text>
      <text x="38" y="13">北</text>
      <text x="38" y="74">南</text>
      <text x="8" y="43">西</text>
      <text x="69" y="43">东</text>
    </svg>
    <button className="h-3 w-[35px] rounded border border-[#a4a8ac] bg-[#8b9094] pl-[2px] text-left text-[8px] leading-[10px] text-[#5f6468]">WCS</button>
  </div>
);

const NavBar: FC = () => (
  <div className="absolute top-[142px] right-[3px] flex h-[155px] w-6 flex-col items-center justify-between rounded bg-[#484848]/90 py-3">
    <Icon w={16} h={20}><g stroke="#2a2a2a"><circle cx="8" cy="10" r="7" /><circle cx="8" cy="10" r="4" /></g></Icon>
    <Icon w={16} h={18}><path d="M4 11V4q1-2 2 0v4V2q1-2 2 0v6V2.500q1-2 2 0V8V4.500q2-1 2 0V12q0 5-4 5t-7-6q1-2 3 0z" stroke="#2a2a2a" /></Icon>
    <Icon w={18} h={18}><path d="M1 1l14 14M15 2L2 15M1 5V1h4M15 10v5h-5" stroke="#2a2a2a" /></Icon>
    <Icon w={16} h={18}><path d="M8 1v16M5 4l3-3 3 3M5 14l3 3 3-3M1 9c0-4 14-4 14 0s-14 4-14 0" stroke="#2a2a2a" strokeWidth="1.300" /></Icon>
    <Icon w={18} h={18}><path d="M1 1h16v4H1zM1 5v12h12V5M5 1v4M11 1v4" stroke="#2a2a2a" /><path d="M5 8l5 3-5 3z" fill="#2a2a2a" stroke="none" /></Icon>
  </div>
);

const CommandLine: FC = () => (
  <div className="absolute bottom-0 left-0 flex h-[18px] w-11/16 items-stretch">
    <div className="flex w-[39px] items-center gap-[9px] bg-[#4e4e4e] pl-[10px]">
      <button aria-label="关闭命令行" className="flex"><Icon w={7} h={7}><path d="M1 1l5 5M6 1L1 6" stroke="#fff" strokeWidth="1.600" /></Icon></button>
      <button aria-label="自定义" className="flex"><Icon w={10} h={9}><path d="M9 8L4 4" stroke="#ddd" strokeWidth="2" /><path d="M1 2l2 3h2V2L3.500 1" stroke="#ddd" /></Icon></button>
    </div>
    <label className="flex flex-1 items-center gap-[7px] bg-[#8fab94] px-1">
      <Icon w={16} h={11}><path d="M1 1h10v9H1z" fill="#a9a4b4" stroke="#888" /><path d="M3 3l3 2-3 2" stroke="#555" /><path d="M13 4h3l-1.500 2z" fill="#333" stroke="none" /></Icon>
      <input aria-label="命令" placeholder="键入命令" className="min-w-0 flex-1 bg-transparent text-[9px] italic outline-none placeholder:text-[#607565]" />
      <Icon w={5} h={3}><path d="M0 3h5L2.500 0z" fill="#111" stroke="none" /></Icon>
    </label>
    <svg width="64" height="60" viewBox="0 0 64 60" fill="none" stroke="#ddd" className="pointer-events-none absolute bottom-0 left-0" aria-hidden="true">
      <path d="M10.500 14v36.500h38M8 47h6v6H8z" />
      <path d="M12 2l4.500 4.500L21 2M16.500 6.500V11M50 39l11 9M60 39l-10 9" />
    </svg>
  </div>
);

const Canvas: FC = () => (
  <main className="relative flex-1 bg-black">
    <Grid />
    <Pointer />
    <div className="absolute top-2 right-2 flex gap-[6px]">
      <button aria-label="最小化图形"><Icon w={9} h={9}><path d="M1 7h7" stroke="#fff" strokeWidth="2" /></Icon></button>
      <button aria-label="还原图形"><Icon w={9} h={9}><path d="M3 1h5v5M1 3h5v5H1z" stroke="#fff" strokeWidth="1.300" /></Icon></button>
      <button aria-label="关闭图形窗口"><Icon w={9} h={9}><path d="M1.500 1l6 7M7.500 1l-6 7" stroke="#fff" strokeWidth="2" /></Icon></button>
    </div>
    <ViewCube />
    <NavBar />
    <CommandLine />
    <svg width="30" height="12" viewBox="0 0 30 12" fill="#b8b8b8" className="absolute right-[123px] bottom-[69px]" aria-hidden="true">
      <circle cx="7" cy="6" r="6" />
      <circle cx="23" cy="8" r="6" />
    </svg>
  </main>
);

/* ---------- status bar ---------- */

interface StatusItem {
  name: string;
  width: string;
  icon?: ReactNode;
  active?: boolean;
  divider?: boolean;
}

const PersonMark = () => <Icon><path d="M2 12l5-6 5 6M7 2v5" strokeWidth="2" /></Icon>;

const statusItems: StatusItem[] = [
  { name: '显示图形栅格', width: 'w-4', active: true, icon: <Icon><path d="M4.500 1v12M9.500 1v12M1 4.500h12M1 9.500h12" stroke="#fff" strokeWidth="1.300" /></Icon> },
  { name: '捕捉模式', width: 'w-[18px]', icon: <Icon><path d="M2 3h11M2 7h11M2 11h11" strokeDasharray="2 2.500" strokeWidth="2" /></Icon> },
  { name: '捕捉菜单', width: 'w-3', icon: <Caret /> },
  { name: '正交模式', width: 'w-[18px]', divider: true, icon: <Icon><path d="M2.500 1v11H13M2.500 9H6v3" /></Icon> },
  { name: '极轴追踪', width: 'w-[18px]', icon: <Icon><circle cx="6" cy="8" r="4.500" /><path d="M6 8h8M6 8l6-6" /></Icon> },
  { name: '极轴菜单', width: 'w-3', icon: <Caret /> },
  { name: '等轴测草图', width: 'w-4', icon: <Icon><path d="M7 1v12M2 2l5 5 4 5" stroke="#aaa" /><path d="M9 7l2-2" stroke="#7aba70" /></Icon> },
  { name: '等轴测菜单', width: 'w-3', icon: <Caret /> },
  { name: '对象捕捉追踪', width: 'w-[18px]', divider: true, icon: <Icon><path d="M12 3L2 12h11" /><path d="M6 8q3 1 3 4" stroke="#bbb" /></Icon> },
  { name: '对象捕捉', width: 'w-[18px]', icon: <Icon><path d="M3 3h9v9H3z" /><path d="M1.500 1.500h3v3h-3z" stroke={GOLD} /></Icon> },
  { name: '对象捕捉菜单', width: 'w-3', icon: <Caret /> },
  { name: '线宽', width: 'w-[18px]', divider: true, icon: <Icon><path d="M2 11h10" strokeWidth="3" /><path d="M5 7h8" /></Icon> },
  { name: '注释可见性', width: 'w-[18px]', active: true, icon: <PersonMark /> },
  { name: '自动缩放', width: 'w-[18px]', icon: <PersonMark /> },
  { name: '注释比例', width: 'w-[18px]', icon: <PersonMark /> },
  { name: '比例列表', width: 'w-[25px]', icon: <Icon><path d="M2 11h11" strokeWidth="2" strokeDasharray="3 1.500" /></Icon> },
  { name: '切换工作空间', width: 'w-[22px]', divider: true, icon: <Icon><circle cx="7" cy="7" r="4" strokeWidth="3" strokeDasharray="2 1" /></Icon> },
  { name: '工作空间菜单', width: 'w-[11px]', icon: <Caret small /> },
  { name: '注释监视器', width: 'w-[18px]', divider: true, icon: <Icon><path d="M7 1v12M2 7h10" strokeWidth="1.500" /></Icon> },
  { name: '隔离对象', width: 'w-[22px]', divider: true, icon: <Icon><path d="M7 6l4 6H3z" /></Icon> },
  { name: '图形性能', width: 'w-[20px]', icon: <Icon><path d="M1 2h11v9H1z" fill="#e8f2fa" stroke="none" /><path d="M2 9l3-5 3 4 3-5" stroke="#3b83b8" /><path d="M10 7l4 7H7z" fill="#e7642c" stroke="none" /></Icon> },
  { name: '全屏显示', width: 'w-[23px]', divider: true, icon: <Icon><path d="M1.500 2.500h11v9h-11z" /><path d="M8 4.500h2.500V7M6 9.500H3.500V7" /></Icon> },
  { name: '自定义', width: 'w-[12px]', icon: <Icon w={12}><path d="M0 2.500h12M0 7h12M0 11.500h12" strokeWidth="1.600" /></Icon> }
];

const StatusBar: FC = () => (
  <footer className="flex h-[22px] items-start justify-between bg-[#383838] text-[9px]">
    <div className="flex pl-[7px] text-[#b8b8b8]">
      {['模型', '布局1', '布局2'].map((name, i) => (
        <button
          key={name}
          className={clsx(
            'h-[14px] px-[9px] leading-[14px] [clip-path:polygon(0_0,100%_0,calc(100%-5px)_100%,5px_100%)]',
            i === 0 ? 'bg-[#777] font-bold text-white' : 'bg-[#555]'
          )}
        >
          {name}
        </button>
      ))}
      <button aria-label="新建布局" className="flex h-[14px] w-5 items-center justify-center rounded-br-lg bg-[#4a4a4a]">
        <Icon w={8} h={8}><path d="M4 0v8M0 4h8" /></Icon>
      </button>
    </div>
    <div className="flex h-[21px] items-center bg-[#505050]">
      <button className="w-6 font-bold text-white">模型</button>
      {statusItems.map(item => (
        <button
          key={item.name}
          aria-label={item.name}
          className={clsx('flex h-4 shrink-0 items-center justify-center', item.width, item.active && 'bg-[#568cc8]', item.divider && 'border-l border-[#747474]')}
        >
          {item.icon}
        </button>
      ))}
    </div>
  </footer>
);

const Watermark: FC = () => (
  <aside className="absolute right-[55px] bottom-[14px] z-20 flex h-[85px] w-[180px] items-center gap-3 bg-[#223158] pl-[15px] text-[#ccd0da]">
    <svg width="35" height="36" viewBox="0 0 35 36" fill="none" stroke="#ccd0da" strokeWidth="2.600" strokeLinecap="round" aria-hidden="true">
      <path d="M2 5v20q0 9 8 9.500" />
      <path d="M14 28q-7 2-7-4V7q0-6 6-5 12 4 18 11 4 5 0 10-8 8-19 11.500" />
      <path d="M13 13l7 5-7 5z" fill="#ccd0da" stroke="none" />
      <path d="M23 15v6" strokeWidth="1.500" />
    </svg>
    <div className="flex flex-col">
      <span className="text-[26px] leading-8 font-bold">溜溜自学</span>
      <span className="font-['DejaVu_Sans',sans-serif] text-[12px] leading-[14px]">zixue.3D66.COM</span>
    </div>
  </aside>
);

const Taskbar: FC = () => (
  <div className="flex h-1 gap-px border-t border-[#c8d4e2] bg-[#3d4854]">
    <span className="w-[88px] bg-[#8ea5bf]" />
    <span className="w-[116px] bg-[#ccd7e4]" />
    <span className="w-[46px] bg-[#8ea5bf]" />
    <span className="w-[116px] bg-[#f4f6f8]" />
    <span className="w-[116px] bg-[#d5dee8]" />
    <span className="flex-1 bg-[#96a9c0]" />
  </div>
);

export default function App() {
  return (
    <div className="relative flex h-screen min-h-[420px] flex-col overflow-hidden bg-[#393939] font-['Noto_Sans','Noto_Sans_CJK_SC',sans-serif]">
      <header>
        <TitleBar />
        <RibbonTabs />
        <Ribbon />
        <button aria-label="应用程序菜单" className="absolute top-0 left-0 flex size-[30px] items-center gap-[2px] border border-[#333] bg-gradient-to-b from-[#a0a0a0] to-[#606060] pl-[2px]">
          <svg width="20" height="22" viewBox="0 0 20 22" aria-hidden="true">
            <path d="M1 19L6 2l2-1h4l2 1 6 15-1 2-3 1-2-1-2-5-5 1-2 4-2 1zM8 11l4-1-2-5z" fill="#cf2429" fillRule="evenodd" />
            <path d="M1 19l5-5 7-2 1 3-6 1-2 4-3 1z" fill="#a3161c" />
            <path d="M6 2l2-1h2L6 13l-5 6z" fill="#ee4f48" />
          </svg>
          <svg width="5" height="4" viewBox="0 0 6 4" aria-hidden="true"><path d="M0 0h6L3 4z" fill="#222" /></svg>
        </button>
      </header>
      <FileTabs />
      <div className="flex flex-1">
        <div className="flex flex-1 flex-col">
          <Canvas />
          <StatusBar />
        </div>
        <div className="w-[6px] border-r border-[#333] bg-gradient-to-b from-[#d4ebf8] to-[#9cc4de]" />
      </div>
      <Taskbar />
      <Watermark />
      <div className="absolute right-[-14px] bottom-[75px] z-20 flex size-7 items-center rounded-full border-2 border-[#d8e8d8] bg-gradient-to-b from-[#62cf62] to-[#22933a] text-[9px] font-bold text-white italic">75</div>
    </div>
  );
}
